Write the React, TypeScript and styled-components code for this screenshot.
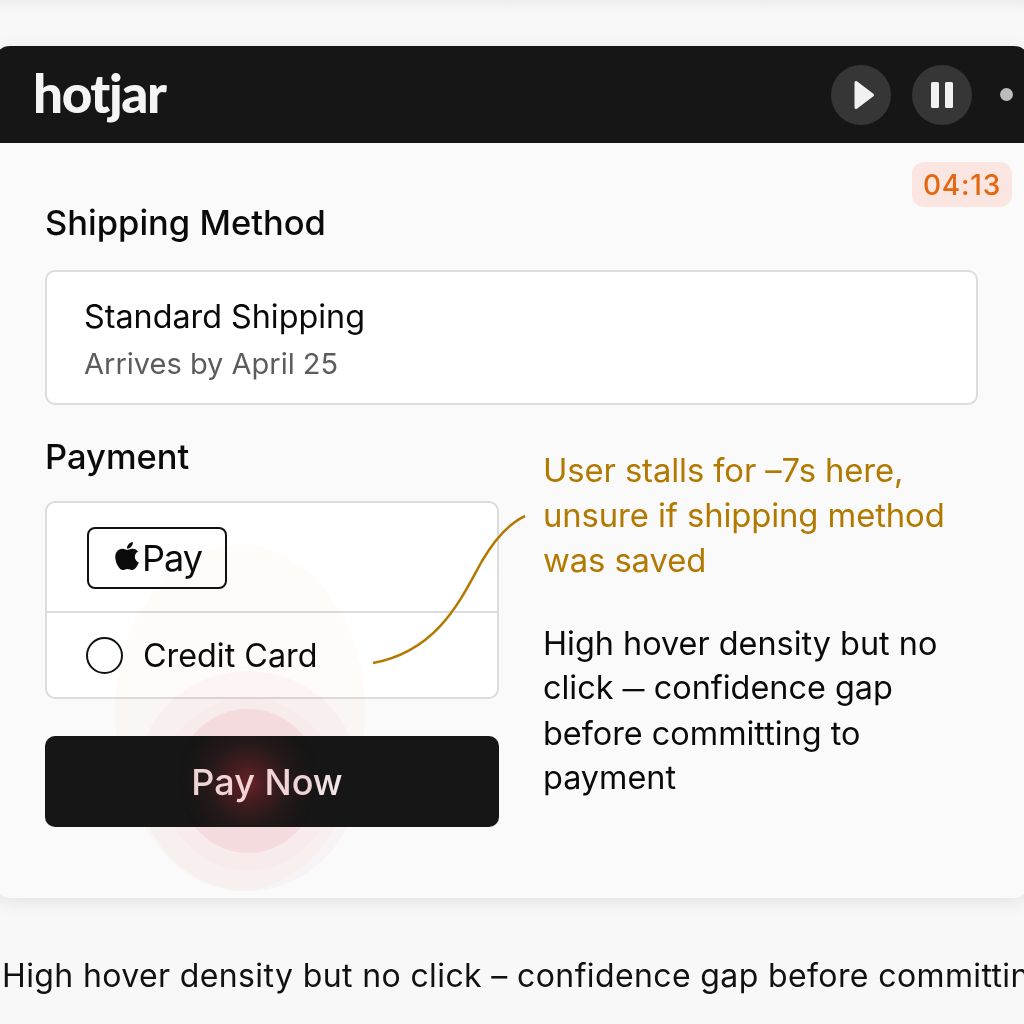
import styled, { createGlobalStyle } from 'styled-components'
import { FaApple } from 'react-icons/fa'

const GlobalStyle = createGlobalStyle`
    html, body {
        margin: 0;
        padding: 0;
    }
    body {
        background: #f7f7f7;
        font-family: 'Inter', 'Liberation Sans', sans-serif;
        color: #0a0a0a;
    }
`

const Page = styled.div`
    width: 1024px;
    height: 1024px;
    overflow: hidden;
    padding-top: 46px;
    box-sizing: border-box;
    background: linear-gradient(#eeeeee 0, #f8f8f8 14px, #f8f8f8 100%);
`

const Card = styled.section`
    position: relative;
    margin: 0 -6px;
    height: 852px;
    background: #fafafa;
    border-radius: 16px;
    box-shadow: 0 4px 18px rgba(0, 0, 0, 0.09);
`

const Header = styled.header`
    height: 97px;
    background: #161616;
    border-radius: 16px 16px 0 0;
    display: flex;
    align-items: center;
    padding: 0 17px 0 39px;
`

const Logo = styled.div`
    flex: 1;
    color: #f4f4f4;
    font-family: 'Lato', sans-serif;
    font-weight: 900;
    font-size: 53px;
    letter-spacing: -1.4px;
    line-height: 1;
    margin-top: -4px;
`

const RoundButton = styled.button`
    width: 60px;
    height: 60px;
    margin-right: 21px;
    padding: 0;
    border: 0;
    border-radius: 50%;
    background: #363636;
    display: flex;
    align-items: center;
    justify-content: center;
`

const PlayIcon = styled.svg`
    margin-left: 6px;
`

const Dot = styled.span`
    width: 13px;
    height: 13px;
    margin-left: 7px;
    border-radius: 50%;
    background: #bcbcbc;
`

const Timer = styled.div`
    position: absolute;
    top: 116px;
    right: 18px;
    width: 100px;
    height: 45px;
    border-radius: 12px;
    background: #fbe5e0;
    color: #e4660f;
    font-size: 28px;
    font-weight: 500;
    letter-spacing: 0.8px;
    display: flex;
    align-items: center;
    justify-content: center;
`

const Body = styled.div`
    padding: 59px 52px 0 51px;
`

const SectionTitle = styled.h2`
    margin: 0;
    font-size: 34.5px;
    font-weight: 500;
    line-height: 42px;
`

const ShippingBox = styled.div`
    margin-top: 26px;
    height: 135px;
    box-sizing: border-box;
    background: #fff;
    border: 2px solid #dcdcdc;
    border-radius: 10px;
    padding: 23px 37px;
`

const ShippingName = styled.div`
    font-size: 32.3px;
    line-height: 44px;
`

const ShippingDate = styled.div`
    margin-top: 3px;
    font-size: 29px;
    line-height: 44px;
    color: #5c5c5c;
`

const Columns = styled.div`
    position: relative;
    margin-top: 31px;
    display: flex;
    gap: 44px;
`

const LeftColumn = styled.div`
    width: 454px;
`

const PaymentBox = styled.div`
    margin-top: 23px;
    height: 198px;
    box-sizing: border-box;
    background: #fff;
    border: 2px solid #dcdcdc;
    border-radius: 10px;
    display: flex;
    flex-direction: column;
`

const PaymentRow = styled.div<{ $divided?: boolean }>`
    height: ${(props) => (props.$divided ? '110px' : 'auto')};
    flex: ${(props) => (props.$divided ? 'none' : 1)};
    box-sizing: border-box;
    border-bottom: ${(props) => (props.$divided ? '2px solid #dcdcdc' : '0')};
    padding-left: 39px;
    display: flex;
    align-items: center;
`

const ApplePayBadge = styled.div`
    width: 140px;
    height: 62px;
    margin: 2px 0 0 1px;
    box-sizing: border-box;
    border: 2px solid #111;
    border-radius: 8px;
    display: flex;
    align-items: center;
    justify-content: center;
    font-size: 36px;
    font-weight: 400;
    letter-spacing: -1px;
    color: #0a0a0a;
`

const AppleMark = styled(FaApple)`
    margin: -4px -1px 0 -1px;
`

const RadioCircle = styled.span`
    width: 37px;
    height: 37px;
    box-sizing: border-box;
    border: 2px solid #111;
    border-radius: 50%;
    margin-right: 20px;
`

const CardLabel = styled.span`
    padding-top: 1px;
    font-size: 32.3px;
`

const PayButton = styled.button`
    display: block;
    width: 100%;
    height: 91px;
    margin-top: 37px;
    padding: 0 10px 0 0;
    border: 0;
    border-radius: 10px;
    background: #161616;
    color: #f4f0f0;
    font-family: inherit;
    font-size: 36px;
    font-weight: 500;
`

const Notes = styled.div`
    flex: 1;
    padding-top: 12px;
`

const AmberNote = styled.p`
    margin: 0;
    color: #b27900;
    font-size: 32.8px;
    line-height: 45px;
    letter-spacing: -0.1px;
`

const DarkNote = styled.p`
    margin: 39px 0 0;
    font-size: 32.4px;
    line-height: 44.4px;
`

const ShortDash = styled.span`
    font-size: 22px;
    font-weight: 600;
    vertical-align: 2px;
`

const Blob = styled.div<{ $left: number; $top: number; $w: number; $h: number; $color: string }>`
    position: absolute;
    left: ${(props) => props.$left}px;
    top: ${(props) => props.$top}px;
    width: ${(props) => props.$w}px;
    height: ${(props) => props.$h}px;
    border-radius: 50% 50% 50% 50% / 48% 48% 52% 52%;
    background: ${(props) => props.$color};
    mix-blend-mode: multiply;
    pointer-events: none;
`

const Glow = styled.div`
    position: absolute;
    left: 188px;
    top: 671px;
    width: 132px;
    height: 132px;
    border-radius: 50%;
    background: radial-gradient(circle closest-side, rgba(120, 18, 22, 0.75) 0, rgba(90, 16, 20, 0.55) 30%, rgba(50, 12, 14, 0.3) 62%, rgba(25, 8, 8, 0) 100%);
    mix-blend-mode: screen;
    pointer-events: none;
`

const Connector = styled.svg`
    position: absolute;
    left: 0;
    top: 0;
    overflow: visible;
    pointer-events: none;
`

const BottomLine = styled.div`
    margin-top: 55px;
    padding-left: 2px;
    font-size: 32px;
    line-height: 46px;
    letter-spacing: 0.38px;
    white-space: nowrap;
    color: #111;
`

export default function App() {
    return (
        <Page>
            <GlobalStyle />
            <Card>
                <Header>
                    <Logo>hotjar</Logo>
                    <RoundButton aria-label="Play">
                        <PlayIcon width="22" height="32" viewBox="0 0 22 32">
                            <path
                                d="M3 3.5 L19.5 16 L3 28.5 Z"
                                fill="#f1f1f1"
                                stroke="#f1f1f1"
                                strokeWidth="3"
                                strokeLinejoin="round"
                            />
                        </PlayIcon>
                    </RoundButton>
                    <RoundButton aria-label="Pause">
                        <svg width="22" height="26" viewBox="0 0 22 26">
                            <rect x="0" y="0" width="8" height="26" rx="1.5" fill="#f1f1f1" />
                            <rect x="14" y="0" width="8" height="26" rx="1.5" fill="#f1f1f1" />
                        </svg>
                    </RoundButton>
                    <Dot />
                </Header>
                <Timer>04:13</Timer>
                <Body>
                    <SectionTitle>Shipping Method</SectionTitle>
                    <ShippingBox>
                        <ShippingName>Standard Shipping</ShippingName>
                        <ShippingDate>Arrives by April 25</ShippingDate>
                    </ShippingBox>
                    <Columns>
                        <LeftColumn>
                            <SectionTitle>Payment</SectionTitle>
                            <PaymentBox>
                                <PaymentRow $divided>
                                    <ApplePayBadge>
                                        <AppleMark size={32} />
                                        Pay
                                    </ApplePayBadge>
                                </PaymentRow>
                                <PaymentRow>
                                    <RadioCircle />
                                    <CardLabel>Credit Card</CardLabel>
                                </PaymentRow>
                            </PaymentBox>
                            <PayButton>Pay Now</PayButton>
                        </LeftColumn>
                        <Notes>
                            <AmberNote>
                                User stalls for –7s here,
                                <br />
                                unsure if shipping method
                                <br />
                                was saved
                            </AmberNote>
                            <DarkNote>
                                High hover density but no
                                <br />
                                click <ShortDash>—</ShortDash> confidence gap
                                <br />
                                before committing to
                                <br />
                                payment
                            </DarkNote>
                        </Notes>
                        <Connector width="1" height="1">
                            <path
                                d="M328 227 C 393 215, 416 163, 437 125 C 451 101, 465 87, 480 80"
                                fill="none"
                                stroke="#b27900"
                                strokeWidth="2.5"
                            />
                        </Connector>
                    </Columns>
                </Body>
                <Blob $left={121} $top={499} $w={250} $h={346} $color="#fefbf8" />
                <Blob $left={144} $top={625} $w={220} $h={220} $color="#fdf9fb" />
                <Blob $left={168} $top={652} $w={172} $h={172} $color="#fffafb" />
                <Blob $left={184} $top={663} $w={140} $h={144} $color="#fceef1" />
                <Glow />
            </Card>
            <BottomLine>High hover density but no click – confidence gap before committing to payment</BottomLine>
        </Page>
    )
}
